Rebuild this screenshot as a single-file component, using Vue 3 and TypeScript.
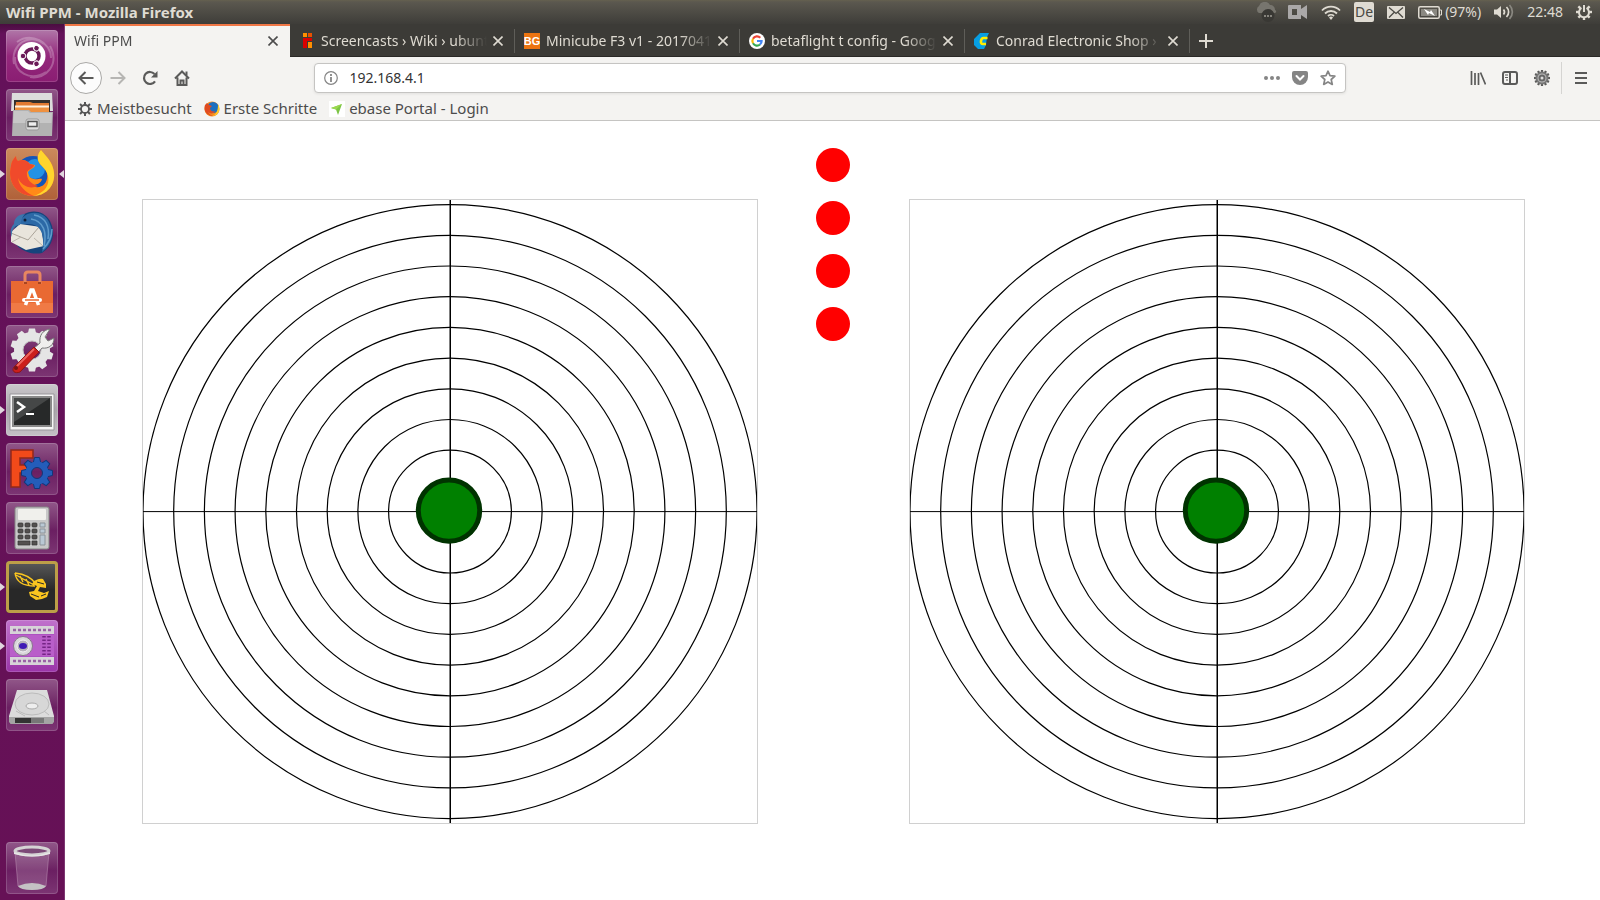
<script setup lang="ts">
import { ref } from 'vue'

interface Tab {
  title: string
  icon: 'none' | 'ubuntuusers' | 'bg' | 'google' | 'conrad'
}

const tabs: Tab[] = [
  { title: 'Wifi PPM', icon: 'none' },
  { title: 'Screencasts › Wiki › ubuntu', icon: 'ubuntuusers' },
  { title: 'Minicube F3 v1 - 2017041', icon: 'bg' },
  { title: 'betaflight t config - Google', icon: 'google' },
  { title: 'Conrad Electronic Shop ›', icon: 'conrad' },
]

const activeTab = ref(0)
const address = ref('192.168.4.1')
const channels = ref([false, false, false, false])
const sticks = ['Left stick', 'Right stick']
const ringStep = 30.7
const rings = Array.from({ length: 10 }, (_, i) => ringStep * (i + 1))
const teeth = Array.from({ length: 8 }, (_, i) => i * 45)
const teeth10 = Array.from({ length: 10 }, (_, i) => i * 36)
const teeth12 = Array.from({ length: 12 }, (_, i) => i * 30)
</script>

<template>
  <div class="desktop">
    <header class="panel">
      <h1 class="window-title">Wifi PPM - Mozilla Firefox</h1>
      <div class="indicators">
        <svg class="i-cloud" width="22" height="20" viewBox="0 0 22 20">
          <path d="M4 11a4 4 0 0 1 0-7 6 6 0 0 1 11-1c3 0 5 2 5 5 2 1 1 3 0 3z" fill="#77756e" />
          <circle cx="13" cy="13.500" r="6.500" fill="#393834" />
          <path d="M9 14h2M12 14h2M15 14h2" stroke="#85837c" stroke-width="2" />
        </svg>
        <svg width="20" height="16" viewBox="0 0 20 16">
          <path d="M1 1h12v4l6-4v14l-6-4v4H1a1 1 0 0 1-1-1V2a1 1 0 0 1 1-1zm3 4v6h5V5z" fill="#aaa8a8" fill-rule="evenodd" />
        </svg>
        <svg width="20" height="16" viewBox="0 0 20 16" fill="none" stroke="#dfdbd2" stroke-width="1.800">
          <path d="M1 6.500a12.500 12.500 0 0 1 18 0M4 9.500a8.400 8.400 0 0 1 12 0M7 12a4.400 4.400 0 0 1 6 0" />
          <path d="M8 13.500a3 3 0 0 1 4 0L10 16z" fill="#dfdbd2" stroke="none" />
        </svg>
        <span class="lang">De</span>
        <svg width="18" height="13" viewBox="0 0 18 13">
          <rect width="18" height="13" rx="1" fill="#dfdbd2" />
          <path d="M2 1.500l7 6 7-6M2 11.500l5-5M16 11.500l-5-5" fill="none" stroke="#4a4943" stroke-width="1.300" />
        </svg>
        <span class="battery">
          <svg width="24" height="13" viewBox="0 0 24 13">
            <rect x=".75" y=".75" width="20.500" height="11.500" rx="1.500" fill="none" stroke="#dfdbd2" stroke-width="1.500" />
            <rect x="3" y="3" width="16" height="7" fill="#8a8881" />
            <path d="M22 4h1.500v5H22" fill="none" stroke="#dfdbd2" />
            <path d="M6 3l6 3 1-2 4 6-6-3-1 2z" fill="#fff" />
          </svg>
          <span>(97%)</span>
        </span>
        <svg width="20" height="16" viewBox="0 0 20 16" fill="none" stroke="#dfdbd2" stroke-width="1.700">
          <path d="M0 5.500h3L7 2v12l-4-3.500H0z" fill="#dfdbd2" stroke="none" />
          <path d="M9.500 5.500a4 4 0 0 1 0 5M12.500 3a7 7 0 0 1 0 10" />
          <path d="M15.500 1a10 10 0 0 1 0 14" stroke="#8a8881" />
        </svg>
        <time>22:48</time>
        <svg width="16" height="16" viewBox="0 0 16 16" stroke="#dfdbd2" fill="none">
          <path v-for="a in teeth" :key="a" d="M8 0v3" stroke-width="2.400" :transform="`rotate(${a} 8 8)`" />
          <path d="M5.500 4a5 5 0 1 0 5 0" stroke-width="2" />
          <path d="M8 0v8" stroke="#504f49" stroke-width="4" />
          <path d="M8 1v7" stroke-width="2" />
        </svg>
      </div>
    </header>

    <nav class="launcher" aria-label="Launcher">
      <button class="tile dash" aria-label="Dash">
        <svg viewBox="0 0 52 52">
          <path d="M8 34C4 14 24 2 38 14M44 16c10 18-4 34-20 31M11 12c14-10 34 0 34 16M40 42C24 52 8 42 9 27" fill="none" stroke="#fff" stroke-opacity=".25" stroke-width="2" />
          <circle cx="25.500" cy="26" r="14" fill="#fff" />
          <circle cx="26" cy="26" r="7" fill="none" stroke="#6b1a58" stroke-width="3.500" />
          <circle v-for="a in [60, 180, 300]" :key="a" cx="35" cy="26" r="2.800" fill="#6b1a58" stroke="#fff" :transform="`rotate(${a} 26 26)`" />
        </svg>
      </button>
      <button class="tile" aria-label="Files">
        <svg viewBox="0 0 52 52">
          <path d="M6 4h40l1 18H5z" fill="#dcdcdc" />
          <path d="M8 11h36v12H8z" fill="#35302d" />
          <path d="M10 13h14l3 1h16v9H9z" fill="#e27a31" />
          <path d="M9 16.500h34V23H9z" fill="#fff1df" />
          <path d="M9 18.500h34V23H9z" fill="#ee9140" />
          <path d="M7 21h16l2 2h22l-1 24H6z" fill="#b2b2b2" />
          <path d="M8 22h14l2 2h22l-.5 10H7z" fill="#c7c7c7" />
          <rect x="20" y="30" width="13" height="11" rx="2" fill="#dedede" stroke="#999" />
          <rect x="22" y="32.500" width="9" height="5" fill="#eee" stroke="#555" stroke-width="1.500" />
        </svg>
      </button>
      <button class="tile orange running focused" aria-label="Firefox">
        <svg viewBox="0 0 52 52">
          <circle cx="27" cy="26" r="18" fill="#1455b8" />
          <circle cx="29" cy="21" r="10" fill="#2392e5" />
          <path d="M35 2c3 4 8 8 11 15 7 17-4 31-19 31C10 48 1 33 5 18c0-3 2-7 5-10 0 3 1 4 2 5 4-2 9-1 12 3l5 1c0 3-5 4-7 7 1 5 2 6 6 7 3 1 6-1 8 0-1 5-8 7-12 6 10 6 19-1 17-12-1-6-8-7-9-13-1-4 1-8 3-10z" fill="#ff8a18" />
          <path d="M35 2c3 4 8 8 11 15 7 17-4 31-19 31 11-3 17-10 15-20-2-8-8-10-10-16-1-4 1-8 3-10z" fill="#ffd52d" />
          <path d="M5 18c0-3 2-7 5-10 0 3 1 4 2 5 4-2 9-1 12 3l4 1c0 3-5 4-7 7-1 7 4 12 11 14-9 4-17-1-20-8 1 8 7 14 16 18C10 48 1 33 5 18z" fill="#f04a2b" />
        </svg>
      </button>
      <button class="tile" aria-label="Thunderbird">
        <svg viewBox="0 0 52 52">
          <path d="M9 16C17 2 36 0 44 14c6 12 3 25-8 32-9 2-21-1-28-11z" fill="#15447c" />
          <path d="M5 25l9-8 21 3 3 19-18 4L5 35z" fill="#e9e5dc" />
          <path d="M5 26l17 7 11-13" fill="none" stroke="#aaa398" />
          <path d="M6 35l9-5M37 39l-9-8" stroke="#bdb7ad" />
          <path d="M13 17C17 3 37 2 43 15c6 12 3 22-7 30 2-10 2-19-4-25-5-4-11-3-19-3z" fill="#2c69a6" />
          <path d="M28 8c12 2 16 12 14 24M25 12c13 2 16 14 13 27M46 22c0 8-3 14-9 20" stroke="#5f9bcb" fill="none" stroke-width="1.500" />
          <path d="M8 17c0-6 5-10 11-10-3 3-4 7-5 11-6 0-9 6-8 12-2-4-2-9 2-13z" fill="#3c75ad" />
          <circle cx="19" cy="13" r="1.500" fill="#101f38" />
        </svg>
      </button>
      <button class="tile" aria-label="Ubuntu Software">
        <svg viewBox="0 0 52 52">
          <path d="M5 15h42v32H5z" fill="#e96932" />
          <path d="M5 37h42v10H5z" fill="#f07a45" />
          <path d="M19 18V9q0-3 3-3h9q3 0 3 3v9" fill="none" stroke="#e88660" stroke-width="3" />
          <path d="M18 17h3M32 17h3" stroke="#a84420" stroke-width="2" />
          <path d="M19.500 39l5.500-15h2l5.500 15" fill="none" stroke="#fff" stroke-width="3.500" />
          <path d="M18 34h16" stroke="#fff" stroke-width="4" stroke-linecap="round" />
          <path d="M19 34h14" stroke="#e96932" stroke-width="1.500" />
        </svg>
      </button>
      <button class="tile" aria-label="System Settings">
        <svg viewBox="0 0 52 52">
          <path v-for="a in teeth10" :key="a" d="M21.500 10l1.500-6.500h6l1.500 6.500z" fill="#e5e5e5" :transform="`rotate(${a} 26 25)`" />
          <circle cx="26" cy="25" r="13.500" fill="none" stroke="#e5e5e5" stroke-width="9" />
          <circle cx="26" cy="25" r="9" fill="none" stroke="#bbb" />
          <path d="M27 24l7-6c-1-8 3-13 10-14l-5 8 3 4 6-3c0 7-5 11-12 10l-5 6z" fill="#efefed" stroke="#777" />
          <path d="M8 42l20-20 5 5-19 20c-5 2-9-1-6-5z" fill="#cc1f1c" stroke="#8d1717" />
          <path d="M11 41l17-17" stroke="#ec6760" stroke-width="2" />
          <circle cx="10" cy="43" r="2" fill="#761516" />
        </svg>
      </button>
      <button class="tile silver running" aria-label="Terminal">
        <svg viewBox="0 0 52 52">
          <path d="M4 10h44v36H4z" fill="#f5f5f5" stroke="#99969b" />
          <path d="M7 13h38v29H7z" fill="#272929" stroke="#898989" stroke-width="2" />
          <path d="M8 14h36L8 38z" fill="#454747" />
          <path d="M11 18l7 5-7 5" fill="none" stroke="#fff" stroke-width="2.500" />
          <path d="M20 30h8" stroke="#fff" stroke-width="2" />
        </svg>
      </button>
      <button class="tile" aria-label="FreeCAD">
        <svg viewBox="0 0 52 52">
          <path d="M5 7h22v8H14v7h10v8H14v14H5z" fill="#f24a1a" stroke="#91291a" stroke-width="1.500" />
          <g transform="translate(31 30)">
            <path v-for="a in teeth" :key="a" d="M-4-9l1.500-6.500h5L4-9z" fill="#245dba" stroke="#123779" :transform="`rotate(${a})`" />
            <circle r="8.500" fill="none" stroke="#245dba" stroke-width="6" />
            <circle r="5.500" fill="none" stroke="#123779" />
          </g>
        </svg>
      </button>
      <button class="tile" aria-label="Calculator">
        <svg viewBox="0 0 52 52">
          <rect x="9" y="5" width="34" height="42" rx="2" fill="#c8c8c8" stroke="#858585" />
          <rect x="12" y="7" width="28" height="11" rx="1" fill="#f0f0ec" />
          <g fill="#53504f" stroke="#353333" stroke-width=".7">
            <rect v-for="n in 9" :key="n" :x="12 + ((n - 1) % 3) * 7" :y="21 + Math.floor((n - 1) / 3) * 6" width="5" height="4" rx="1" />
            <path d="M12 39h12v4H12zM26 39h5v4h-5z" />
          </g>
          <path d="M34 21h5v4h-5zM34 27h5v4h-5zM34 33h5v10h-5z" fill="#b9c8d4" stroke="#8b9299" />
        </svg>
      </button>
      <button class="tile hornet running" aria-label="Betaflight">
        <svg viewBox="0 0 52 52">
          <path d="M9 12c9 1 17 5 21 11M9 12c1 8 7 13 20 13M10 14l18 10M14 15l3 6M20 18l3 6" fill="none" stroke="#fac51f" stroke-width="1.400" />
          <path d="M28 20c3-1 5-3 9-2l3 5v4l-6-1-2 4 6 2 5-2-2 6-5 2-6 1-6-4-1-4 5-1 3-5-5-2z" fill="#fac51f" />
          <path d="M31 21l7 2M25 33l8 3M35 35l5-2" stroke="#292929" />
        </svg>
      </button>
      <button class="tile violet running" aria-label="Screen recorder">
        <svg viewBox="0 0 52 52">
          <path d="M4 6h44v38H4z" fill="#ad51c1" />
          <path d="M4 15h44v21H4z" fill="#b95ec9" />
          <path d="M4 6h44v8H4zM4 37h44v8H4z" fill="#d7d3d8" />
          <path d="M7 10h39M7 41h39" stroke="#9a62a6" stroke-width="2.500" stroke-dasharray="3 2" />
          <circle cx="17" cy="26" r="9.500" fill="#d8d6d9" stroke="#88768d" />
          <circle cx="17" cy="26" r="6" fill="#b7b2bb" stroke="#f5f3f5" />
          <ellipse cx="17" cy="26" rx="4" ry="3" fill="#401bb5" />
          <path d="M38 16v20M43 16v20" stroke="#752485" stroke-width="3.500" stroke-dasharray="1.500 2" />
        </svg>
      </button>
      <button class="tile" aria-label="Disk">
        <svg viewBox="0 0 52 52">
          <path d="M11 11h30l7 26v5l-2 3H5l-2-3v-5z" fill="#dcdcdc" />
          <path d="M3 38h45v5l-2 2H5l-2-2z" fill="#a4a4a4" />
          <path d="M9 39h16v5H9z" fill="#333" />
          <path d="M25 39h13v5H25z" fill="#777" />
          <ellipse cx="26" cy="25" rx="17" ry="11" fill="#d7d7d7" stroke="#bbb" />
          <ellipse cx="26" cy="27" rx="6" ry="3" fill="#eee" stroke="#aaa" />
          <path d="M10 32l9 5M38 32l5 4" stroke="#bbb" />
        </svg>
      </button>
      <button class="tile trash" aria-label="Trash">
        <svg viewBox="0 0 52 52">
          <path d="M9 10h34l-3 34q-14 6-28 0z" fill="#fff" fill-opacity=".16" stroke="#bd94b6" stroke-opacity=".5" />
          <path d="M12 44q14-6 28 0-2 4-14 4t-14-4z" fill="#c4c2c4" />
          <ellipse cx="26" cy="9" rx="17" ry="4" fill="#7c4977" stroke="#d5d3d4" stroke-width="3" />
          <path d="M8 10q18 7 36 0v2q-18 5-36 0z" fill="#e6e5e5" />
        </svg>
      </button>
    </nav>

    <main class="browser">
      <div class="tabbar">
        <div v-for="(tab, i) in tabs" :key="tab.title" class="tab" :class="{ active: i === activeTab }">
          <button class="tab-label" @click="activeTab = i">
            <svg v-if="tab.icon === 'ubuntuusers'" width="16" height="16" viewBox="0 0 16 16">
              <path d="M4 0h4v4H4z" fill="#ff8f00" /><path d="M9 0h4v4H9z" fill="#e85100" />
              <path d="M4 5h9v3H8v7H4z" fill="#db0000" /><path d="M9 9h4v6H9z" fill="#ff8f00" />
            </svg>
            <svg v-else-if="tab.icon === 'bg'" width="16" height="16" viewBox="0 0 16 16">
              <path d="M0 0h16v16H0z" fill="#ec7411" />
              <text class="bg-text" x="8" y="12" text-anchor="middle">BG</text>
            </svg>
            <svg v-else-if="tab.icon === 'google'" width="16" height="16" viewBox="0 0 16 16" fill="none" stroke-width="2.200">
              <circle cx="8" cy="8" r="8" fill="#fff" />
              <path d="M11.300 4.700A4.600 4.600 0 0 0 4 5.700" stroke="#ea4335" />
              <path d="M4 5.700a4.600 4.600 0 0 0 0 4.600" stroke="#fbbc05" />
              <path d="M4 10.300a4.600 4.600 0 0 0 7 1.200" stroke="#34a853" />
              <path d="M11 11.500A4.500 4.500 0 0 0 12.600 8H8" stroke="#4285f4" />
            </svg>
            <svg v-else-if="tab.icon === 'conrad'" width="16" height="16" viewBox="0 0 16 16">
              <path d="M6 0h9l-2 4-1 8-2 4H4l-4-4V6z" fill="#079ee3" />
              <path d="M13.500 5H9.500Q7.500 5 7 8t2 3h3" fill="none" stroke="#ffed00" stroke-width="2.600" />
            </svg>
            <span class="tab-title">{{ tab.title }}</span>
          </button>
          <button class="tab-close" :aria-label="`Close ${tab.title}`">
            <svg width="10" height="10" viewBox="0 0 10 10"><path d="M.5.5l9 9M9.500.5l-9 9" /></svg>
          </button>
        </div>
        <button class="new-tab" aria-label="New tab">
          <svg width="14" height="14" viewBox="0 0 14 14"><path d="M7 0v14M0 7h14" /></svg>
        </button>
      </div>

      <div class="toolbar">
        <button class="tool back" aria-label="Back">
          <svg width="16" height="16" viewBox="0 0 16 16"><path d="M15.500 8H1.500M7.500 2l-6 6 6 6" /></svg>
        </button>
        <button class="tool forward" aria-label="Forward" disabled>
          <svg width="16" height="16" viewBox="0 0 16 16"><path d="M.5 8h14M8.500 2l6 6-6 6" /></svg>
        </button>
        <button class="tool" aria-label="Reload">
          <svg width="16" height="16" viewBox="0 0 16 16">
            <path d="M13 11.300a6 6 0 1 1-.5-7.300" stroke-width="2.200" /><path d="M15.500 1v6.500H9z" class="solid" />
          </svg>
        </button>
        <button class="tool" aria-label="Home">
          <svg width="16" height="16" viewBox="0 0 16 16">
            <path d="M1 8.500l7-7 7 7M3.500 7.500V15h9V7.500" /><path d="M6.500 15v-4.500h3V15" /><path d="M11.500 1.500h2v4h-2z" class="solid" />
          </svg>
        </button>
        <form class="urlbar" @submit.prevent>
          <button type="button" class="url-button" aria-label="Site information">
            <svg width="14" height="14" viewBox="0 0 14 14">
              <circle cx="7" cy="7" r="6.300" stroke-width="1.200" /><path d="M7 6v5M7 3v2" stroke-width="1.800" />
            </svg>
          </button>
          <input v-model="address" type="text" aria-label="Address" />
          <button type="button" class="url-button" aria-label="Page actions">
            <svg width="16" height="16" viewBox="0 0 16 16"><g class="solid"><circle cx="2" cy="8" r="2" /><circle cx="8" cy="8" r="2" /><circle cx="14" cy="8" r="2" /></g></svg>
          </button>
          <button type="button" class="url-button" aria-label="Save to Pocket">
            <svg width="16" height="16" viewBox="0 0 16 16">
              <path class="solid" d="M2 1h12a2 2 0 0 1 2 2v4A8 8 0 0 1 0 7V3a2 2 0 0 1 2-2z" />
              <path class="tick" d="M4.500 6L8 9.500 11.500 6" />
            </svg>
          </button>
          <button type="button" class="url-button" aria-label="Bookmark this page">
            <svg width="16" height="16" viewBox="0 0 16 16">
              <path d="M8 1.200l2 4.500 4.900.5-3.700 3.300 1.100 4.900L8 11.900l-4.300 2.500 1.100-4.900L1.100 6.200 6 5.700z" stroke-width="1.700" stroke-linejoin="round" />
            </svg>
          </button>
        </form>
        <button class="tool" aria-label="Library">
          <svg width="16" height="16" viewBox="0 0 16 16"><path d="M1.500 1v14M5 3v12M8.500 3v12M10.500 2.500l5 12" stroke-width="1.700" /></svg>
        </button>
        <button class="tool" aria-label="Sidebars">
          <svg width="16" height="16" viewBox="0 0 16 16">
            <rect x="1" y="2" width="14" height="12" rx="2" /><path d="M8 2v12" /><path d="M3 5h3M3 7.500h3M4 10h2" stroke-width="1" />
          </svg>
        </button>
        <button class="tool" aria-label="Extension">
          <svg width="16" height="16" viewBox="0 0 16 16">
            <path v-for="a in teeth12" :key="a" d="M8 0v3" stroke-width="2.200" :transform="`rotate(${a} 8 8)`" />
            <circle class="cog" cx="8" cy="8" r="5.500" />
            <circle class="hub" cx="8" cy="8" r="2.500" />
          </svg>
        </button>
        <span class="divider"></span>
        <button class="tool" aria-label="Menu">
          <svg width="16" height="16" viewBox="0 0 16 16"><path d="M2 3h12M2 8h12M2 13h12" /></svg>
        </button>
      </div>

      <nav class="bookmarks" aria-label="Bookmarks">
        <a href="#">
          <svg width="16" height="16" viewBox="0 0 16 16" fill="none" stroke="#555">
            <path v-for="a in teeth" :key="a" d="M8 1v3" stroke-width="2" :transform="`rotate(${a} 8 8)`" />
            <circle cx="8" cy="8" r="4" stroke-width="1.800" />
          </svg>
          Meistbesucht
        </a>
        <a href="#">
          <svg width="16" height="16" viewBox="0 0 16 16">
            <circle cx="8" cy="8" r="7.500" fill="#f58a1f" />
            <circle cx="9" cy="6.500" r="5.500" fill="#1c6fc0" />
            <path d="M14 3c3 5 1 12-6 12 5-2 6-6 6-12z" fill="#ffcb2b" />
            <path d="M1 4l2-2 2 2 3 1-2 2c0 3 3 4 5 3-1 3-5 3-7 1 1 2 3 3 5 4C3 15-1 10 1 4z" fill="#e04b20" />
          </svg>
          Erste Schritte
        </a>
        <a href="#">
          <svg width="16" height="16" viewBox="0 0 16 16">
            <path d="M0 0h16v16H0z" fill="#fff" /><path d="M13 3L2 7l5 1.500L9 14z" fill="#7cc444" /><path d="M13 3L7 8.500 2 7z" fill="#9bd94e" />
          </svg>
          ebase Portal - Login
        </a>
      </nav>

      <section class="page">
        <div v-for="name in sticks" :key="name" class="pad-cell">
          <svg class="pad" viewBox="0 0 614 623" role="img" :aria-label="name">
            <g fill="none" stroke="#000">
              <circle v-for="r in rings" :key="r" cx="307" cy="311.500" :r="r" stroke-width="1.200" />
              <path d="M0 311.500h614" />
              <path d="M307.250 0v623" stroke-width="1.500" />
            </g>
            <circle cx="306" cy="310.500" r="30.700" fill="#008000" stroke="#003300" stroke-width="5" />
          </svg>
        </div>
        <div class="channels">
          <button
            v-for="(on, i) in channels"
            :key="i"
            class="channel"
            :class="{ on }"
            :aria-label="`Channel ${i + 1}`"
            :aria-pressed="on"
            @click="channels[i] = !on"
          ></button>
        </div>
      </section>
    </main>
  </div>
</template>

<style>
body {
  margin: 0;
}
</style>

<style scoped>
.desktop {
  display: grid;
  grid-template: 24px minmax(0, 1fr) / 65px minmax(0, 1fr);
  height: 100vh;
  font-family: 'Noto Sans', sans-serif;
  font-size: 14px;
  line-height: 20px;
  color: #4c4c4c;
  overflow: hidden;
}
button {
  display: flex;
  align-items: center;
  justify-content: center;
  padding: 0;
  border: 0;
  background: none;
  color: inherit;
  font: inherit;
}
svg {
  display: block;
  flex: none;
}

/* top panel */
.panel {
  grid-column: 1 / -1;
  display: flex;
  align-items: center;
  justify-content: space-between;
  padding: 0 8px 0 6px;
  background: linear-gradient(#65614f 0, #5b584f 2px, #3e3d39);
  color: #dfdbd2;
}
.window-title {
  margin: 0;
  font-size: 15px;
  font-weight: 700;
}
.indicators {
  display: flex;
  align-items: center;
  gap: 13px;
}
.i-cloud {
  margin-right: -2px;
}
.lang {
  width: 20px;
  border-radius: 2px;
  background: #dfdbd2;
  color: #4a4943;
  text-align: center;
}
.battery {
  display: flex;
  align-items: center;
  gap: 3px;
}

/* launcher */
.launcher {
  display: flex;
  flex-direction: column;
  gap: 7px;
  padding: 6px 7px 6px 6px;
  background: linear-gradient(#4a0d40, #64115a 10px, #661156);
  box-shadow: inset -1px 0 #7c3671;
}
.tile {
  position: relative;
  flex: none;
  width: 52px;
  height: 52px;
  border-radius: 4px;
  background: linear-gradient(#915789, #75306c 40%, #6b1f62 55%, #7c3573);
  box-shadow: inset 0 0 0 1px rgba(255, 255, 255, 0.16);
}
.tile svg {
  width: 52px;
  height: 52px;
}
.dash {
  background: linear-gradient(#b077a8, #94287c 50%, #8a1d72);
}
.orange {
  background: linear-gradient(#cc8a5c, #b06139);
}
.silver {
  background: linear-gradient(#cbc8cc, #a9a4aa 50%, #c5c0c6);
}
.hornet {
  background: linear-gradient(#5c5c5c, #282828 55%);
  box-shadow: inset 0 0 0 3px #bd9e48;
}
.violet {
  background: linear-gradient(#c071cc, #9a35a8);
}
.trash {
  margin-top: auto;
}
.running::before,
.focused::after {
  content: '';
  position: absolute;
  top: 22px;
  border: 4px solid transparent;
}
.running::before {
  left: -6px;
  border-left: 5px solid #e0d6de;
  border-right: 0;
}
.focused::after {
  right: -6px;
  border-right: 5px solid #e0d6de;
  border-left: 0;
}

/* browser */
.browser {
  display: flex;
  flex-direction: column;
  min-width: 0;
  background: #f4f3f1;
}
.tabbar {
  display: flex;
  height: 33px;
  box-sizing: border-box;
  background: #3c3b37;
  box-shadow: inset 0 -1px #2a2926;
  color: #dfdbd2;
}
.tab {
  display: flex;
  flex: 0 1 225px;
  align-items: center;
  box-sizing: border-box;
  min-width: 0;
  padding: 0 6px 0 9px;
  background: linear-gradient(#5f5e59, #5f5e59) right center / 1px 24px no-repeat;
}
.tab.active {
  background: #f4f3f1;
  box-shadow: inset 0 2px #f07746;
  color: #4c4c4c;
}
.tab-label {
  flex: 1;
  justify-content: flex-start;
  gap: 6px;
  min-width: 0;
}
.tab-title {
  flex: 1;
  overflow: hidden;
  text-align: left;
  white-space: nowrap;
  mask-image: linear-gradient(to left, transparent, #000 32px);
}
.tab-close {
  width: 22px;
  height: 22px;
}
.tab-close svg,
.new-tab svg {
  fill: none;
  stroke: currentColor;
  stroke-width: 1.6;
}
.new-tab {
  width: 31px;
}
.new-tab svg {
  stroke-width: 2;
}
.bg-text {
  font: 700 11px 'Liberation Sans', sans-serif;
  fill: #fff;
}
.toolbar {
  display: flex;
  align-items: center;
  height: 42px;
  padding: 0 3px 0 5px;
}
.tool {
  width: 32px;
  height: 32px;
}
.tool svg,
.urlbar svg {
  fill: none;
  stroke: #5a5a59;
  stroke-width: 2;
}
.toolbar .solid {
  fill: #5a5a59;
  stroke: none;
}
.tool .cog {
  fill: #bdbdbd;
  stroke: #777;
}
.tool .hub {
  fill: #ddd;
  stroke: #666;
}
.back {
  box-sizing: border-box;
  border: 1px solid #aaa9a7;
  border-radius: 50%;
  background: #fcfcfc;
}
.forward svg {
  opacity: 0.4;
}
.urlbar {
  display: flex;
  flex: 1;
  align-items: center;
  box-sizing: border-box;
  height: 30px;
  margin: 0 7.625%;
  padding: 0 3px 0 6px;
  border: 1px solid #c5c4c2;
  border-radius: 4px;
  background: #fff;
  box-shadow: 0 1px 3px rgba(0, 0, 0, 0.08);
}
.urlbar svg {
  stroke: #858585;
}
.urlbar .solid {
  fill: #858585;
}
.urlbar .tick {
  stroke: #fff;
  stroke-linecap: round;
}
.url-button {
  width: 28px;
  height: 28px;
}
.url-button:first-child {
  width: 20px;
}
.urlbar input {
  flex: 1;
  min-width: 0;
  padding: 0 8px;
  border: 0;
  outline: 0;
  background: none;
  color: #333;
  font: inherit;
}
.divider {
  width: 1px;
  height: 32px;
  margin: 0 3px;
  background: #d5d4d2;
}
.bookmarks {
  display: flex;
  align-items: flex-start;
  gap: 12px;
  height: 21px;
  padding: 0 12px;
  border-bottom: 1px solid #c5c4c2;
  font-size: 15px;
  line-height: 19px;
}
.bookmarks a {
  display: flex;
  align-items: center;
  gap: 4px;
  color: inherit;
  text-decoration: none;
  white-space: nowrap;
}

/* stick page */
.page {
  display: grid;
  flex: 1;
  grid-template: minmax(0, 1fr) / 1fr 1fr;
  min-height: 0;
  background: #fff;
}
.pad-cell {
  display: grid;
  grid-template: 1fr minmax(0, 8fr) 1fr / 1fr minmax(0, 8fr) 1fr;
  grid-area: 1 / 1;
}
.pad-cell:nth-child(2) {
  grid-column: 2;
}
.pad {
  grid-area: 2 / 2;
  width: 100%;
  height: 100%;
  border: 1px solid #d0d0d0;
}
.channels {
  display: flex;
  flex-direction: column;
  grid-area: 1 / 1 / 2 / 3;
  gap: 19px;
  place-self: start center;
  padding-top: 27px;
}
.channel {
  width: 34px;
  height: 34px;
  border-radius: 50%;
  background: #f00;
}
.channel.on {
  background: #008000;
}
</style>
